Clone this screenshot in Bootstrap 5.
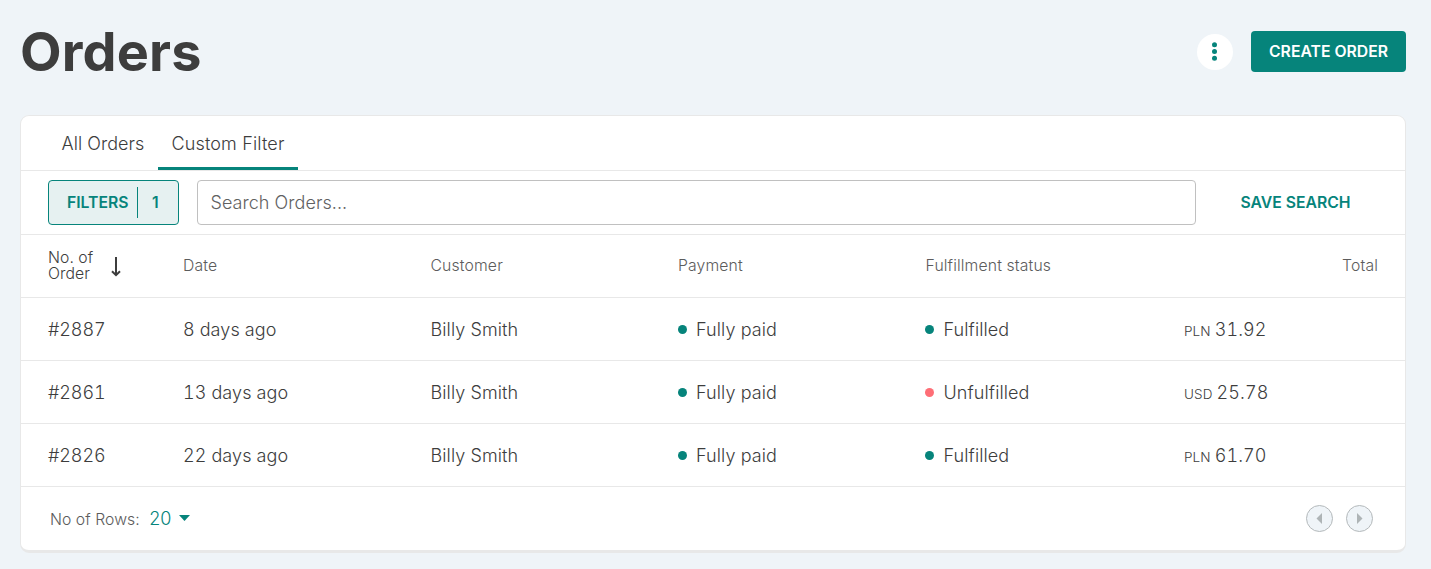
<!DOCTYPE html>
<html lang="en">
<head>
<meta charset="utf-8">
<title>Orders</title>
<meta name="viewport" content="width=device-width, initial-scale=1">
<link href="https://cdn.jsdelivr.net/npm/bootstrap@5.3.0/dist/css/bootstrap.min.css" rel="stylesheet">
<style>
:root{--teal:#06847b;--ink:#3d3d3d;--muted-ink:#5c5c5c;--line:#e8e8e8}
body{background:#eff4f8;color:var(--ink);font-family:Inter,"Liberation Sans",sans-serif;font-size:18px;font-weight:360;letter-spacing:.1px;line-height:27px;overflow:hidden}
.page-head{padding:31px 25px 0 20px;height:115px}
.page-title{font-size:54px;line-height:54px;font-weight:700;margin-top:-6px;letter-spacing:.15px}
.btn-more{width:36px;height:36px;background:#fff;margin-top:3px;margin-right:18px}
.btn-create{background:var(--teal);color:#fff;width:155px;height:41px;border-radius:4px;font-size:15.75px;font-weight:600;letter-spacing:0}
.panel{margin:0 25px 0 20px;height:438px;border:1px solid var(--line);border-bottom:3px solid #e8e8e8;border-radius:9px}
.tab-row{height:55px;padding-left:27px;border-bottom:1px solid var(--line)}
.tab-item{color:var(--ink);height:54px;line-height:56px;padding:0 13.5px;border-radius:0;white-space:nowrap}
.tab-item:first-child{letter-spacing:.05px}
.tab-item.active{border-bottom:3px solid var(--teal);letter-spacing:.15px}
.tab-item:hover{color:var(--ink)}
.filter-row{height:64px;padding:0 36px 0 27px;border-bottom:1px solid var(--line)}
.btn-filter{width:131px;height:45px;border:1px solid var(--teal);border-radius:4px;background:#e6f1f1;color:var(--teal);font-size:15.75px;font-weight:600;letter-spacing:0;padding:0 18px}
.btn-filter .divider{width:1px;height:31px;background:var(--teal);margin:0 14.5px 0 8px}
.search-box{height:45px;margin-left:18px;width:999px;border:1px solid #c0c0c0;border-radius:4px;padding:0 12.5px;font-size:18px;font-weight:360;letter-spacing:.05px;color:var(--ink)}
.search-box::placeholder{color:#616161;opacity:1}
.btn-save{color:var(--teal);font-size:15.75px;font-weight:600;width:146px;margin-left:26.5px;padding:0}
.orders-grid{table-layout:fixed;margin:-1px 0 0;color:var(--ink);width:1384px}
.orders-grid>:not(caption)>*>*{height:63px;padding:2px 0 0;border-bottom:1px solid var(--line);vertical-align:middle;color:var(--ink);background:transparent}
.orders-grid>:not(caption)>*>:first-child{padding-left:27px}
.orders-grid>thead>tr>th{font-size:15.75px;font-weight:360;letter-spacing:.14px;color:var(--muted-ink);padding-top:0}
.orders-grid>thead>tr>th.sorted{color:var(--ink);line-height:16px;letter-spacing:.05px;padding-top:1px}
.orders-grid>thead>tr>th:last-child{padding-right:27px}
.orders-grid .num{font-variant-numeric:tabular-nums}
.orders-grid .num:first-child{letter-spacing:-.1px}
.sort-arrow{margin-left:16.500px;margin-top:3px}
.dot{display:inline-block;width:9px;height:9px;border-radius:50%;background:var(--teal);margin:0 9.5px 0 -.5px;vertical-align:2px}
.dot.bad{background:#fe6e76}
.cur{font-size:13.5px;line-height:1;margin-right:4px}
.foot-row{height:63px;padding:0 32px 0 29px}
.rows-label{font-size:15.75px;letter-spacing:.05px;color:var(--muted-ink);padding-top:2px}
.btn-rows{color:var(--teal);font-size:18px;font-weight:360;line-height:27px;padding:0;margin-left:9.5px}
.btn-page{width:27px;height:27px;border:1px solid #b4b9bb;background:#eff4f8}
.pager{gap:13px}
</style>
</head>
<body>
<header class="page-head d-flex justify-content-between align-items-start">
  <h1 class="page-title mb-0">Orders</h1>
  <div class="d-flex">
    <button class="btn btn-more rounded-circle p-0 border-0 d-flex" aria-label="More">
      <svg width="36" height="36" fill="#06847b"><circle cx="17.5" cy="10.7" r="2.5"/><circle cx="17.5" cy="17.5" r="2.5"/><circle cx="17.5" cy="24.3" r="2.5"/></svg>
    </button>
    <button class="btn btn-create border-0 p-0">CREATE ORDER</button>
  </div>
</header>
<main class="panel bg-white">
  <nav class="nav tab-row flex-nowrap">
    <a class="nav-link tab-item" href="#">All Orders</a>
    <a class="nav-link tab-item active" href="#">Custom Filter</a>
  </nav>
  <div class="filter-row d-flex align-items-center">
    <button class="btn btn-filter d-flex align-items-center flex-shrink-0"><span>FILTERS</span><span class="divider"></span><span>1</span></button>
    <input class="form-control search-box flex-shrink-0" placeholder="Search Orders...">
    <button class="btn btn-save border-0">SAVE SEARCH</button>
  </div>
  <table class="table orders-grid">
    <colgroup><col style="width:162px"><col style="width:247.5px"><col style="width:247.5px"><col style="width:247.5px"><col style="width:258.5px"><col></colgroup>
    <thead>
      <tr>
        <th class="sorted"><div class="d-flex align-items-center"><span>No. of<br>Order</span>
          <svg class="sort-arrow" width="12" height="20" fill="none" stroke="#3d3d3d" stroke-width="2"><path d="M6 0v18M2 14.2l4 4 4-4"/></svg></div></th>
        <th>Date</th><th>Customer</th><th>Payment</th><th>Fulfillment status</th><th class="text-end">Total</th>
      </tr>
    </thead>
    <tbody>
      <tr><td class="num">#2887</td><td class="num">8 days ago</td><td>Billy Smith</td><td><i class="dot"></i>Fully paid</td><td><i class="dot"></i>Fulfilled</td><td class="num"><span class="cur">PLN</span>31.92</td></tr>
      <tr><td class="num">#2861</td><td class="num">13 days ago</td><td>Billy Smith</td><td><i class="dot"></i>Fully paid</td><td><i class="dot bad"></i>Unfulfilled</td><td class="num"><span class="cur">USD</span>25.78</td></tr>
      <tr><td class="num">#2826</td><td class="num">22 days ago</td><td>Billy Smith</td><td><i class="dot"></i>Fully paid</td><td><i class="dot"></i>Fulfilled</td><td class="num"><span class="cur">PLN</span>61.70</td></tr>
    </tbody>
  </table>
  <div class="foot-row d-flex align-items-center">
    <span class="rows-label">No of Rows:</span>
    <button class="btn btn-rows border-0 d-flex align-items-center">20<svg class="ms-2" width="11" height="6" fill="#06847b"><path d="M0 0h11L5.5 6z"/></svg></button>
    <div class="pager d-flex ms-auto">
      <button class="btn btn-page rounded-circle p-0 d-flex" aria-label="Previous"><svg width="25" height="25" fill="#aeb4b6"><path d="M15 7v11L9.500 12.500z"/></svg></button>
      <button class="btn btn-page rounded-circle p-0 d-flex" aria-label="Next"><svg width="25" height="25" fill="#aeb4b6"><path d="M10 7v11l5.500-5.500z"/></svg></button>
    </div>
  </div>
</main>
<script src="https://cdn.jsdelivr.net/npm/bootstrap@5.3.0/dist/js/bootstrap.bundle.min.js"></script>
</body>
</html>
